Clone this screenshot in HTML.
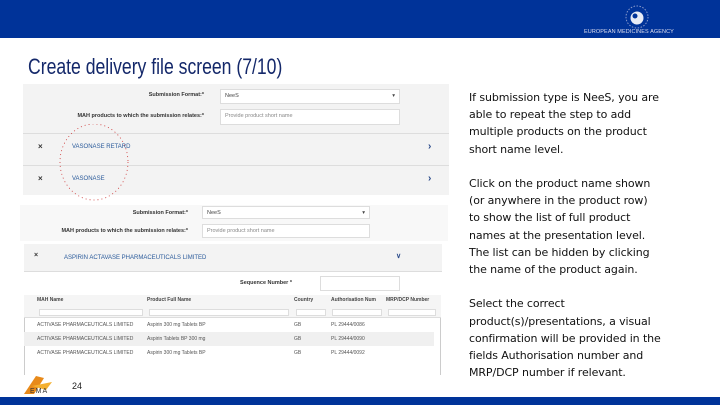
<!DOCTYPE html>
<html><head><meta charset="utf-8"><style>
*{margin:0;padding:0;box-sizing:border-box}
body{width:720px;height:405px;overflow:hidden;background:#fff;font-family:"Liberation Sans",sans-serif;position:relative}
.abs{position:absolute}
.top{left:0;top:0;width:720px;height:38px;background:#003399}
.bot{left:0;top:397px;width:720px;height:8px;background:#003399}
.title{left:28px;top:54px;font-size:22px;color:#14286a;transform:scaleX(0.8);transform-origin:left top;white-space:nowrap}
.txt{left:469px;top:89px;width:250px;font-family:"DejaVu Sans",sans-serif;font-size:11px;line-height:17.2px;color:#111;white-space:nowrap;letter-spacing:-0.1px}
.txt p{margin-bottom:17.2px}
.ss{background:#f3f3f3}
.lbl{font-size:5.5px;color:#333;font-weight:bold;text-align:right;white-space:nowrap}
.inp{background:#fff;border:1px solid #ddd;font-size:5.5px;color:#888;padding:3px 4px}
.link{font-size:6px;color:#2a5a9a}
.sep{background:#ddd;height:1px}
.tbl{font-size:5px;color:#555;white-space:nowrap}
</style></head><body>
<div class="abs top"></div>
<svg class="abs" style="left:624px;top:4px" width="26" height="26" viewBox="0 0 26 26"><circle cx="13" cy="13" r="11" fill="none" stroke="#8899cc" stroke-width="1" stroke-dasharray="1.5 1.5"/><circle cx="13" cy="14" r="6.5" fill="#e8ecf6"/><circle cx="11" cy="12" r="2.5" fill="#003399"/></svg>
<div class="abs" style="left:584px;top:29px;font-size:5.5px;color:#dde;letter-spacing:0.1px">EUROPEAN MEDICINES AGENCY</div>
<div class="abs title">Create delivery file screen (7/10)</div>

<!-- screenshot 1 -->
<div class="abs ss" style="left:23px;top:84px;width:426px;height:111px"></div>
<div class="abs lbl" style="left:100px;top:92px;width:104px">Submission Format:*</div>
<div class="abs inp" style="left:220px;top:89px;width:180px;height:15px;color:#444">NeeS<span style="float:right">▾</span></div>
<div class="abs lbl" style="left:50px;top:113px;width:154px">MAH products to which the submission relates:*</div>
<div class="abs inp" style="left:220px;top:109px;width:180px;height:16px">Provide product short name</div>
<div class="abs sep" style="left:23px;top:133px;width:426px"></div>
<div class="abs" style="left:38px;top:142px;font-size:8px;font-weight:bold;color:#333">×</div>
<div class="abs link" style="left:72px;top:144px">VASONASE RETARD</div>
<div class="abs" style="left:428px;top:141px;font-size:10px;font-weight:bold;color:#2a4a8a">›</div>
<div class="abs sep" style="left:23px;top:165px;width:426px"></div>
<div class="abs" style="left:38px;top:174px;font-size:8px;font-weight:bold;color:#333">×</div>
<div class="abs link" style="left:72px;top:176px">VASONASE</div>
<div class="abs" style="left:428px;top:173px;font-size:10px;font-weight:bold;color:#2a4a8a">›</div>
<svg class="abs" style="left:58px;top:124px" width="80" height="80"><ellipse cx="36" cy="38" rx="34" ry="38" fill="none" stroke="#c33" stroke-width="0.8" stroke-dasharray="1 3"/></svg>

<!-- screenshot 2 -->
<div class="abs" style="left:20px;top:205px;width:428px;height:36px;background:#f8f8f8"></div>
<div class="abs lbl" style="left:100px;top:210px;width:88px">Submission Format:*</div>
<div class="abs inp" style="left:202px;top:206px;width:168px;height:13px;color:#444">NeeS<span style="float:right">▾</span></div>
<div class="abs lbl" style="left:40px;top:228px;width:148px">MAH products to which the submission relates:*</div>
<div class="abs inp" style="left:202px;top:224px;width:168px;height:14px">Provide product short name</div>
<div class="abs ss" style="left:24px;top:244px;width:418px;height:28px;border-bottom:1px solid #ddd"></div>
<div class="abs" style="left:34px;top:252px;font-size:7px;font-weight:bold;color:#333">×</div>
<div class="abs link" style="left:64px;top:255px">ASPIRIN ACTAVASE PHARMACEUTICALS LIMITED</div>
<div class="abs" style="left:396px;top:252px;font-size:7px;font-weight:bold;color:#2a4a8a">∨</div>
<div class="abs lbl" style="left:220px;top:280px;width:72px">Sequence Number *</div>
<div class="abs inp" style="left:320px;top:276px;width:80px;height:15px"></div>
<div class="abs" style="left:24px;top:295px;width:417px;height:80px;border:1px solid #ccc;border-bottom:none;background:#fff"></div>
<div class="abs" style="left:24px;top:295px;width:417px;height:23px;background:#f5f5f5;border-bottom:1px solid #ddd"></div>
<div class="abs tbl" style="left:37px;top:297px;font-weight:bold;color:#444">MAH Name</div>
<div class="abs tbl" style="left:147px;top:297px;font-weight:bold;color:#444">Product Full Name</div>
<div class="abs tbl" style="left:294px;top:297px;font-weight:bold;color:#444">Country</div>
<div class="abs tbl" style="left:331px;top:297px;font-weight:bold;color:#444">Authorisation Num</div>
<div class="abs tbl" style="left:386px;top:297px;font-weight:bold;color:#444">MRP/DCP Number</div>
<div class="abs inp" style="left:39px;top:309px;width:104px;height:7px;padding:0"></div>
<div class="abs inp" style="left:149px;top:309px;width:140px;height:7px;padding:0"></div>
<div class="abs inp" style="left:296px;top:309px;width:30px;height:7px;padding:0"></div>
<div class="abs inp" style="left:332px;top:309px;width:50px;height:7px;padding:0"></div>
<div class="abs inp" style="left:388px;top:309px;width:48px;height:7px;padding:0"></div>
<div class="abs" style="left:24px;top:332px;width:410px;height:14px;background:#f0f0f0"></div>
<div class="abs tbl" style="left:37px;top:322px">ACTIVASE PHARMACEUTICALS LIMITED</div>
<div class="abs tbl" style="left:147px;top:322px">Aspirin 300 mg Tablets BP</div>
<div class="abs tbl" style="left:294px;top:322px">GB</div>
<div class="abs tbl" style="left:331px;top:322px">PL 29444/0086</div>
<div class="abs tbl" style="left:37px;top:336px">ACTIVASE PHARMACEUTICALS LIMITED</div>
<div class="abs tbl" style="left:147px;top:336px">Aspirin Tablets BP 300 mg</div>
<div class="abs tbl" style="left:294px;top:336px">GB</div>
<div class="abs tbl" style="left:331px;top:336px">PL 29444/0090</div>
<div class="abs tbl" style="left:37px;top:350px">ACTIVASE PHARMACEUTICALS LIMITED</div>
<div class="abs tbl" style="left:147px;top:350px">Aspirin 300 mg Tablets BP</div>
<div class="abs tbl" style="left:294px;top:350px">GB</div>
<div class="abs tbl" style="left:331px;top:350px">PL 29444/0092</div>

<!-- footer -->
<svg class="abs" style="left:22px;top:374px" width="36" height="22"><polygon points="2,20 14,2 22,4 12,20" fill="#e88a1a"/><polygon points="10,12 30,8 24,16" fill="#f4b030"/></svg>
<div class="abs" style="left:30px;top:388px;font-size:7px;color:#333;letter-spacing:1px">EMA</div>
<div class="abs" style="left:72px;top:381px;font-size:9px;color:#222">24</div>

<div class="abs txt">
<p>If submission type is NeeS, you are<br>able to repeat the step to add<br>multiple products on the product<br>short name level.</p>
<p>Click on the product name shown<br>(or anywhere in the product row)<br>to show the list of full product<br>names at the presentation level.<br>The list can be hidden by clicking<br>the name of the product again.</p>
<p>Select the correct<br>product(s)/presentations, a visual<br>confirmation will be provided in the<br>fields Authorisation number and<br>MRP/DCP number if relevant.</p>
</div>
<div class="abs bot"></div>
</body></html>
